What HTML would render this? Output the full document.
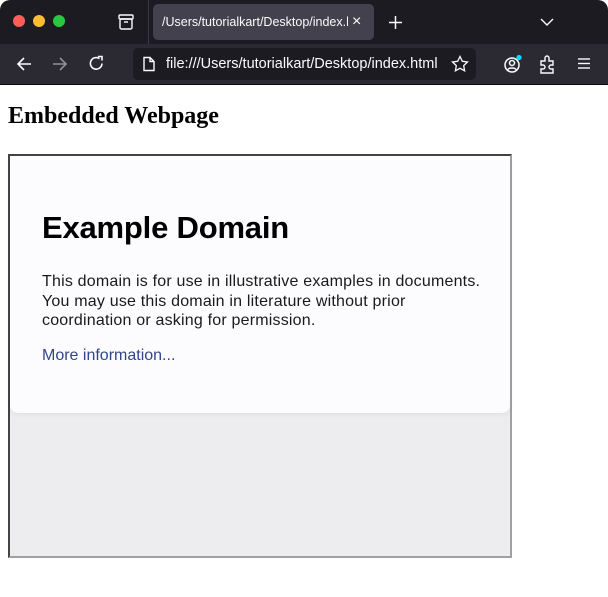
<!DOCTYPE html>
<html><head><style>
*{margin:0;padding:0;box-sizing:border-box}
body{width:608px;height:597px;background:#fff;font-family:"Liberation Sans",sans-serif;position:relative;overflow:hidden}
.tb{position:absolute;left:0;top:0;width:608px;height:44px;background:#1c1b22;border-radius:10px 10px 0 0}
.dot{position:absolute;top:15px;width:12px;height:12px;border-radius:50%}
.tab{position:absolute;left:153px;top:4px;width:221px;height:36px;background:#42414d;border-radius:5px;color:#fbfbfe;font-size:12.5px;line-height:36px;padding-left:9px;white-space:nowrap;overflow:hidden}
.nav{position:absolute;left:0;top:44px;width:608px;height:41px;background:#2b2a33;border-bottom:1px solid #0c0c0d}
.url{position:absolute;left:133px;top:4px;width:343px;height:32px;background:#1c1b22;border-radius:5px;color:#fbfbfe;font-size:14.5px;line-height:32px;padding-left:33px}
svg{position:absolute}
h2{position:absolute;left:8px;top:103px;font-family:"Liberation Serif",serif;font-size:24px;font-weight:bold}
.fr{position:absolute;left:8px;top:154px;width:504px;height:404px;border:2px solid;border-color:#444 #a0a0a0 #a0a0a0 #444;background:#ededf0}
.card{position:absolute;left:0;top:0;width:500px;height:257px;background:#fcfcfe;border-radius:0 0 8px 8px;box-shadow:0 2px 6px rgba(0,0,0,.05);padding:0 32px}
.card h1{position:absolute;left:32px;top:54px;font-size:31px;font-weight:bold;letter-spacing:-0.2px}
.card p{position:absolute;left:32px;top:116px;width:445px;font-size:16px;line-height:19.5px;color:#1a1a1a;letter-spacing:0.2px}
.card a{position:absolute;left:32px;top:191px;font-size:16px;color:#334488;text-decoration:none}
.tab .x{position:absolute;left:195px;top:0;width:26px;height:36px;background:#42414d;font-size:16px;padding-left:4px}
</style></head><body>
<div class="tb">
<div class="dot" style="left:13px;background:#ff5f57"></div>
<div class="dot" style="left:33px;background:#febc2e"></div>
<div class="dot" style="left:53px;background:#28c840"></div>
<svg style="left:117px;top:13px" width="18" height="18" viewBox="0 0 18 18" fill="none" stroke="#fbfbfe" stroke-width="1.4"><rect x="2" y="2" width="14" height="4" rx="1"/><rect x="3" y="6" width="12" height="10" rx="1.5"/><line x1="7" y1="9" x2="11" y2="9"/></svg>
<div style="position:absolute;left:148px;top:0;width:1px;height:44px;background:#3a3944"></div>
<div class="tab">/Users/tutorialkart/Desktop/index.ht<span class="x">×</span></div>
<svg style="left:388px;top:15px" width="15" height="15" stroke="#fbfbfe" stroke-width="1.5"><line x1="7.5" y1="1" x2="7.5" y2="14"/><line x1="1" y1="7.5" x2="14" y2="7.5"/></svg>
<svg style="left:540px;top:17px" width="14" height="10" fill="none" stroke="#fbfbfe" stroke-width="1.4"><path d="M1 2l6 6 6-6"/></svg>
</div>
<div class="nav">
<svg style="left:16px;top:12px" width="16" height="16" fill="none" stroke="#fbfbfe" stroke-width="1.6"><path d="M15 8H2M8 2L2 8l6 6"/></svg>
<svg style="left:52px;top:12px" width="16" height="16" fill="none" stroke="#8f8f9d" stroke-width="1.6"><path d="M1 8h13M8 2l6 6-6 6"/></svg>
<svg style="left:88px;top:11px" width="17" height="17" fill="none" stroke="#fbfbfe" stroke-width="1.6"><path d="M14 8.5A5.8 5.8 0 1 1 11.5 3.6"/><path d="M10 1.5h4v4"/></svg>
<div class="url">file:///Users/tutorialkart/Desktop/index.html
<svg style="left:9px;top:8px" width="14" height="16" fill="none" stroke="#fbfbfe" stroke-width="1.4"><path d="M2 1.5h6l4 4v9H2z M8 1.5v4h4"/></svg>
<svg style="left:318px;top:7px" width="18" height="18" fill="none" stroke="#fbfbfe" stroke-width="1.3"><path d="M9 1.5l2.3 4.8 5.2.7-3.8 3.6.9 5.2L9 13.3l-4.6 2.5.9-5.2L1.5 7l5.2-.7z"/></svg>
</div>
<svg style="left:503px;top:10px" width="20" height="20" fill="none" stroke="#fbfbfe" stroke-width="1.5"><circle cx="9" cy="11" r="7"/><circle cx="9" cy="9" r="2.5"/><path d="M5 15.5c1-2 7-2 8 0"/><circle cx="16" cy="3.5" r="2.6" fill="#0df" stroke="none"/></svg>
<svg style="left:539px;top:11px" width="18" height="19" fill="none" stroke="#fbfbfe" stroke-width="1.4"><path d="M2 6h4V3a2 2 0 0 1 4 0v3h4v4h-2a2 2 0 0 0 0 4h2v4H2v-4h2a2 2 0 0 0 0-4H2z"/></svg>
<svg style="left:577px;top:13px" width="14" height="13" stroke="#fbfbfe" stroke-width="1.4"><line x1="1" y1="2" x2="13" y2="2"/><line x1="1" y1="6.5" x2="13" y2="6.5"/><line x1="1" y1="11" x2="13" y2="11"/></svg>
</div>
<h2>Embedded Webpage</h2>
<div class="fr"><div class="card">
<h1>Example Domain</h1>
<p>This domain is for use in illustrative examples in documents. You may use this domain in literature without prior<br>coordination or asking for permission.</p>
<a>More information...</a>
</div></div>
</body></html>
